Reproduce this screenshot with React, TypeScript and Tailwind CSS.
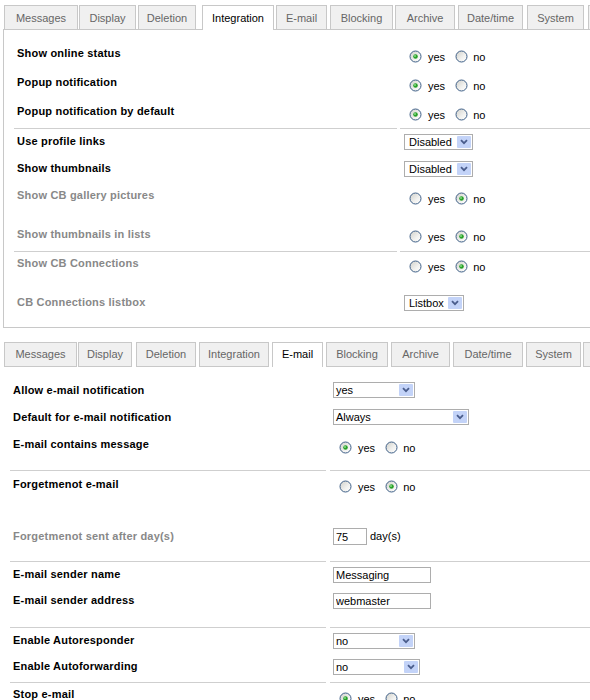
import React from "react";

type TabDef = { label: string; cls: string; active?: boolean };

// first tab strip sits on a bordered panel
const topTabs: TabDef[] = [
  { label: "Messages", cls: "ml-[4px] w-[74px]" },
  { label: "Display", cls: "ml-[1px] w-[57px]" },
  { label: "Deletion", cls: "ml-[2px] w-[58px]" },
  { label: "Integration", cls: "ml-[6px] w-[72px]", active: true },
  { label: "E-mail", cls: "ml-[2px] w-[51px]" },
  { label: "Blocking", cls: "ml-[3px] w-[63px]" },
  { label: "Archive", cls: "ml-[2px] w-[60px]" },
  { label: "Date/time", cls: "ml-[3px] w-[65px]" },
  { label: "System", cls: "ml-[4px] w-[57px]" },
  { label: "", cls: "ml-[4px] w-[60px]" },
];

const mailTabs: TabDef[] = [
  { label: "Messages", cls: "ml-[4px] w-[73px]" },
  { label: "Display", cls: "ml-[1px] w-[54px]" },
  { label: "Deletion", cls: "ml-[4px] w-[60px]" },
  { label: "Integration", cls: "ml-[3px] w-[70px]" },
  { label: "E-mail", cls: "ml-[3px] w-[51px]", active: true },
  { label: "Blocking", cls: "ml-[3px] w-[62px]" },
  { label: "Archive", cls: "ml-[3px] w-[59px]" },
  { label: "Date/time", cls: "ml-[3px] w-[70px]" },
  { label: "System", cls: "ml-[3px] w-[55px]" },
  { label: "", cls: "ml-[2px] w-[60px]" },
];

const TopTabBar = () => (
  <div className="flex items-start h-[24px] relative z-10">
    {topTabs.map((t, i) => (
      <div
        key={i}
        className={`${t.cls} shrink-0 text-center text-[11px] leading-[13px] pt-[6px] border-x border-t border-[#c8c8c8] ${
          t.active ? "h-[25px] bg-white text-black" : "h-[24px] bg-[#f0f0f0] text-[#666]"
        }`}
      >
        {t.label}
      </div>
    ))}
  </div>
);

const MailTabBar = () => (
  <div className="flex items-start h-[25px]">
    {mailTabs.map((t, i) => (
      <div
        key={i}
        className={`${t.cls} shrink-0 h-[25px] text-center text-[11px] leading-[13px] pt-[5px] border-[#c8c8c8] ${
          t.active ? "border-x border-t bg-white text-black" : "border bg-[#f0f0f0] text-[#666]"
        }`}
      >
        {t.label}
      </div>
    ))}
  </div>
);

const Radio = ({ on }: { on: boolean }) => (
  <svg width="13" height="13" viewBox="0 0 13 13" className="shrink-0">
    <defs>
      <linearGradient id="radioFill" x1="0" y1="0" x2="1" y2="1">
        <stop offset="0" stopColor="#cfcfc9" />
        <stop offset="0.6" stopColor="#f2f2f0" />
        <stop offset="1" stopColor="#ffffff" />
      </linearGradient>
    </defs>
    <circle cx="6.5" cy="6.5" r="5.5" fill="url(#radioFill)" stroke="#3f6088" strokeWidth="1" />
    {on && (
      <>
        <circle cx="6.5" cy="6.5" r="2.3" fill="#28a028" />
        <circle cx="6" cy="6" r="0.9" fill="#8fe08f" />
      </>
    )}
  </svg>
);

// yes / no pair
const YesNo = ({ yes, ml }: { yes: boolean; ml: string }) => (
  <div className={`${ml} flex items-start text-[11px] leading-[13px]`}>
    <Radio on={yes} />
    <span className="ml-[6px] mt-[1px]">yes</span>
    <span className="ml-[10px]">
      <Radio on={!yes} />
    </span>
    <span className="ml-[5px] mt-[1px]">no</span>
  </div>
);

const Select = ({ w, pl, ml, value }: { w: string; pl: string; ml: string; value: string }) => (
  <div className={`${w} ${ml} shrink-0 h-[16px] border border-[#adadad] bg-white flex items-center`}>
    <span className={`${pl} flex-1 text-[11px] leading-[13px] whitespace-nowrap overflow-hidden`}>{value}</span>
    <span className="w-[14px] h-[12px] mr-px rounded-[1px] bg-[#c3d3f8] flex items-center justify-center">
      <svg width="8" height="6" viewBox="0 0 8 6">
        <path d="M1 1.2 L4 4.2 L7 1.2" stroke="#4a5d8c" strokeWidth="1.8" fill="none" />
      </svg>
    </span>
  </div>
);

const TextBox = ({ w, h, value }: { w: string; h: string; value: string }) => (
  <input
    readOnly
    defaultValue={value}
    className={`${w} ${h} ml-[3px] shrink-0 border border-[#adadad] bg-white px-[2px] text-[11px] leading-[13px] outline-none`}
  />
);

type RowProps = {
  h: string;
  lp: string;
  cp: string;
  lw: string;
  label: string;
  dim?: boolean;
  children: React.ReactNode;
};

const Row = ({ h, lp, cp, lw, label, dim, children }: RowProps) => (
  <div className={`${h} flex items-start`}>
    <div
      className={`${lw} ${lp} mt-[1px] shrink-0 pl-[13px] text-[11px] leading-[13px] font-bold tracking-[0.2px] ${
        dim ? "text-[#888]" : "text-black"
      }`}
    >
      {label}
    </div>
    <div className={`${cp} flex-1 flex items-center`}>{children}</div>
  </div>
);

const Sep1 = () => (
  <div className="flex gap-[3px] pl-[10px]">
    <div className="w-[383px] h-px bg-[#cfcfcf]" />
    <div className="flex-1 h-px bg-[#cfcfcf]" />
  </div>
);

const Sep2 = () => (
  <div className="flex gap-[4px] pl-[10px]">
    <div className="w-[316px] h-px bg-[#cfcfcf]" />
    <div className="flex-1 h-px bg-[#cfcfcf]" />
  </div>
);

const L1 = "w-[396px]";
const L2 = "w-[330px]";

export default function App() {
  return (
    <div className="w-[590px] h-[700px] overflow-hidden bg-white text-black font-['Liberation_Sans',Arial,sans-serif]">
      {/* Integration settings */}
      <div className="pt-[5px]">
        <TopTabBar />
        <div className="ml-[3px] w-[620px] border border-[#c8c8c8]">
          <div className="pt-[9px] pb-[2px]">
            <Row h="h-[29px]" lp="pt-[7px]" cp="pt-[11px]" lw={L1} label="Show online status">
              <YesNo yes ml="ml-[9px]" />
            </Row>
            <Row h="h-[29px]" lp="pt-[7px]" cp="pt-[11px]" lw={L1} label="Popup notification">
              <YesNo yes ml="ml-[9px]" />
            </Row>
            <Row h="h-[29px]" lp="pt-[7px]" cp="pt-[11px]" lw={L1} label="Popup notification by default">
              <YesNo yes ml="ml-[9px]" />
            </Row>
          </div>
          <Sep1 />
          <Row h="h-[27px]" lp="pt-[5px]" cp="pt-[5px]" lw={L1} label="Use profile links">
            <Select w="w-[69px]" ml="ml-[4px]" pl="pl-[4px]" value="Disabled" />
          </Row>
          <Row h="h-[27px]" lp="pt-[5px]" cp="pt-[5px]" lw={L1} label="Show thumbnails">
            <Select w="w-[69px]" ml="ml-[4px]" pl="pl-[4px]" value="Disabled" />
          </Row>
          <Row h="h-[38px]" lp="pt-[5px]" cp="pt-[9px]" lw={L1} label="Show CB gallery pictures" dim>
            <YesNo yes={false} ml="ml-[9px]" />
          </Row>
          <Row h="h-[30px]" lp="pt-[6px]" cp="pt-[9px]" lw={L1} label="Show thumbnails in lists" dim>
            <YesNo yes={false} ml="ml-[9px]" />
          </Row>
          <Sep1 />
          <Row h="h-[38px]" lp="pt-[4px]" cp="pt-[8px]" lw={L1} label="Show CB Connections" dim>
            <YesNo yes={false} ml="ml-[9px]" />
          </Row>
          <Row h="h-[37px]" lp="pt-[5px]" cp="pt-[5px]" lw={L1} label="CB Connections listbox" dim>
            <Select w="w-[60px]" ml="ml-[4px]" pl="pl-[4px]" value="Listbox" />
          </Row>
        </div>
      </div>

      {/* E-mail settings */}
      <div className="mt-[14px]">
        <MailTabBar />
        <div className="pt-[13px]">
          <Row h="h-[27px]" lp="pt-[3px]" cp="pt-[2px]" lw={L2} label="Allow e-mail notification">
            <Select w="w-[82px]" ml="ml-[3px]" pl="pl-[2px]" value="yes" />
          </Row>
          <Row h="h-[27px]" lp="pt-[3px]" cp="pt-[2px]" lw={L2} label="Default for e-mail notification">
            <Select w="w-[136px]" ml="ml-[3px]" pl="pl-[2px]" value="Always" />
          </Row>
          <Row h="h-[36px]" lp="pt-[3px]" cp="pt-[7px]" lw={L2} label="E-mail contains message">
            <YesNo yes ml="ml-[9px]" />
          </Row>
        </div>
        <Sep2 />
        <Row h="h-[48px]" lp="pt-[6px]" cp="pt-[9px]" lw={L2} label="Forgetmenot e-mail">
          <YesNo yes={false} ml="ml-[9px]" />
        </Row>
        <Row h="h-[42px]" lp="pt-[10px]" cp="pt-[9px]" lw={L2} label="Forgetmenot sent after day(s)" dim>
          <TextBox w="w-[34px]" h="h-[17px]" value="75" />
          <span className="ml-[3px] text-[11px] leading-[13px]">day(s)</span>
        </Row>
        <Sep2 />
        <Row h="h-[26px]" lp="pt-[5px]" cp="pt-[5px]" lw={L2} label="E-mail sender name">
          <TextBox w="w-[98px]" h="h-[16px]" value="Messaging" />
        </Row>
        <Row h="h-[39px]" lp="pt-[5px]" cp="pt-[5px]" lw={L2} label="E-mail sender address">
          <TextBox w="w-[98px]" h="h-[16px]" value="webmaster" />
        </Row>
        <Sep2 />
        <Row h="h-[27px]" lp="pt-[5px]" cp="pt-[5px]" lw={L2} label="Enable Autoresponder">
          <Select w="w-[82px]" ml="ml-[3px]" pl="pl-[2px]" value="no" />
        </Row>
        <Row h="h-[27px]" lp="pt-[4px]" cp="pt-[4px]" lw={L2} label="Enable Autoforwarding">
          <Select w="w-[87px]" ml="ml-[3px]" pl="pl-[2px]" value="no" />
        </Row>
        <Sep2 />
        <Row h="h-[30px]" lp="pt-[4px]" cp="pt-[9px]" lw={L2} label="Stop e-mail">
          <YesNo yes ml="ml-[9px]" />
        </Row>
      </div>
    </div>
  );
}
